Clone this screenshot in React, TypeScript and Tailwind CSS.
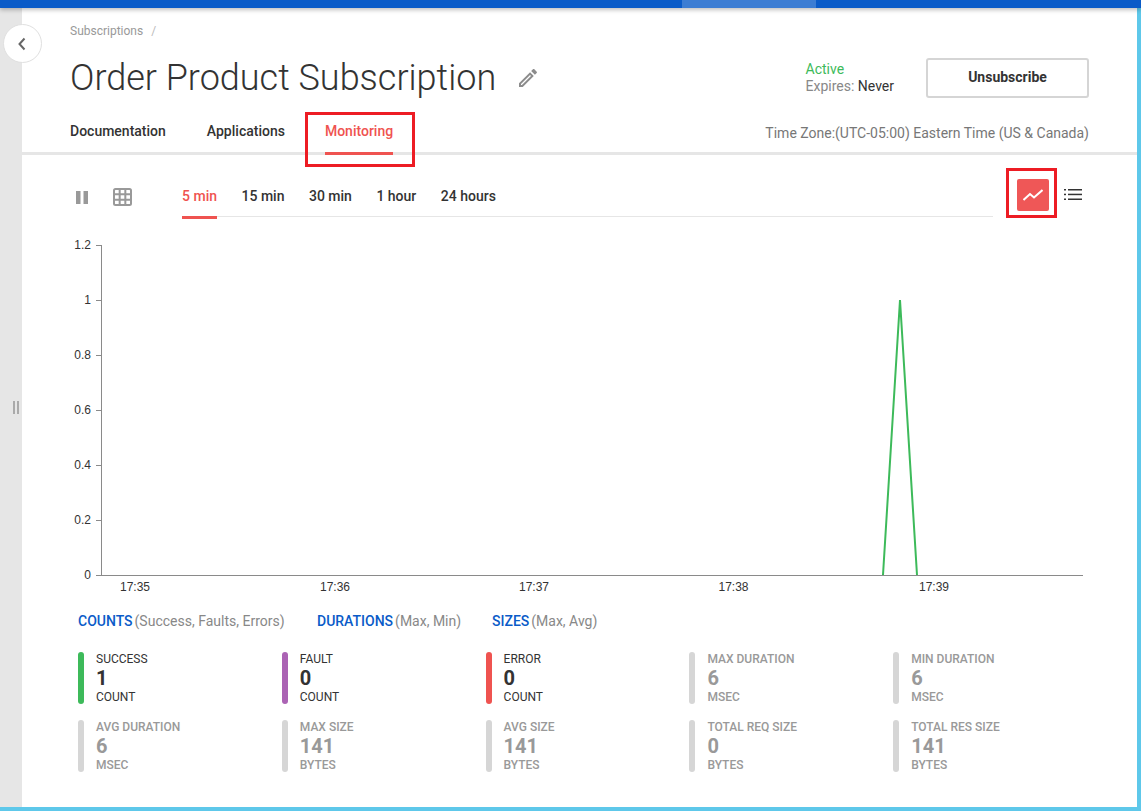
const stats = [
  { label: 'SUCCESS', value: '1', unit: 'COUNT', bar: 'bg-[#3dba5a]', on: true },
  { label: 'FAULT', value: '0', unit: 'COUNT', bar: 'bg-[#ab63b4]', on: true },
  { label: 'ERROR', value: '0', unit: 'COUNT', bar: 'bg-[#ef5350]', on: true },
  { label: 'MAX DURATION', value: '6', unit: 'MSEC', bar: 'bg-[#d6d6d6]', on: false },
  { label: 'MIN DURATION', value: '6', unit: 'MSEC', bar: 'bg-[#d6d6d6]', on: false },
  { label: 'AVG DURATION', value: '6', unit: 'MSEC', bar: 'bg-[#d6d6d6]', on: false },
  { label: 'MAX SIZE', value: '141', unit: 'BYTES', bar: 'bg-[#d6d6d6]', on: false },
  { label: 'AVG SIZE', value: '141', unit: 'BYTES', bar: 'bg-[#d6d6d6]', on: false },
  { label: 'TOTAL REQ SIZE', value: '0', unit: 'BYTES', bar: 'bg-[#d6d6d6]', on: false },
  { label: 'TOTAL RES SIZE', value: '141', unit: 'BYTES', bar: 'bg-[#d6d6d6]', on: false },
];

const yTicks = [
  { y: 245, label: '1.2' },
  { y: 300, label: '1' },
  { y: 355, label: '0.8' },
  { y: 410, label: '0.6' },
  { y: 465, label: '0.4' },
  { y: 520, label: '0.2' },
  { y: 575, label: '0' },
];

const xTicks = [
  { x: 135, label: '17:35' },
  { x: 335, label: '17:36' },
  { x: 534, label: '17:37' },
  { x: 733.5, label: '17:38' },
  { x: 934, label: '17:39' },
];

function Chart() {
  return (
    <svg viewBox="70 235 1019 365" className="block w-[1019px] h-[365px]">
      <line x1="101.5" y1="245" x2="101.5" y2="575" stroke="#8a8a8a" />
      <line x1="96" y1="575.5" x2="1083" y2="575.5" stroke="#8a8a8a" />
      {yTicks.map((t) => (
        <g key={t.label}>
          <line x1="96" y1={t.y + 0.5} x2="101" y2={t.y + 0.5} stroke="#8a8a8a" />
          <text x="91" y={t.y + 4} textAnchor="end" fontSize="12" fill="#333" fontFamily="'Liberation Sans', sans-serif">{t.label}</text>
        </g>
      ))}
      {xTicks.map((t) => (
        <text key={t.label} x={t.x} y="591" textAnchor="middle" fontSize="12" fill="#333" fontFamily="'Liberation Sans', sans-serif">{t.label}</text>
      ))}
      <polyline points="883,575 900,300 917,575" fill="none" stroke="#3dba5a" strokeWidth="2" />
    </svg>
  );
}

function Stat({ label, value, unit, bar, on }: (typeof stats)[number]) {
  return (
    <div className="flex h-[52px]">
      <div className={`w-[6px] h-full rounded-[3px] ${bar}`} />
      <div className={`ml-3 flex flex-col ${on ? 'text-[#333]' : 'text-[#999] font-medium'}`}>
        <span className="text-[12px] leading-[14px] h-[14px]">{label}</span>
        <span className="text-[20px] font-bold leading-[24px] h-[24px]">{value}</span>
        <span className="text-[12px] leading-[14px] h-[14px]">{unit}</span>
      </div>
    </div>
  );
}

export default function App() {
  return (
    <div className="relative flex flex-col w-[1141px] h-[811px] overflow-hidden bg-white font-['Roboto',sans-serif]">
      <div className="relative z-10 h-2 shrink-0 bg-[#0a5bc8] shadow-[0_2px_4px_rgba(0,0,0,0.25)] flex">
        <div className="ml-[682px] w-[134px] bg-[#3c7dd3]" />
      </div>

      <div className="flex flex-1 min-h-0">
        <div className="relative w-[22px] shrink-0 bg-[#e6e6e6]">
          <div className="absolute left-[13px] top-[393px] flex gap-[2px]">
            <div className="w-[2px] h-[13px] bg-[#aaa]" />
            <div className="w-[2px] h-[13px] bg-[#aaa]" />
          </div>
        </div>

        <div className="flex-1 min-w-0 flex flex-col">
          <div className="px-12">
            <div className="pt-[15px] h-[37px] text-[12px] leading-[16px] text-[#999]">
              Subscriptions <span className="ml-[5px] text-[#bbb]">/</span>
            </div>
            <div className="flex items-start h-[67px]">
              <h1 className="text-[36px] font-light leading-[66px] text-[#333]">Order Product Subscription</h1>
              <svg viewBox="0 0 24 24" className="ml-[20px] mt-[21px] w-[24px] h-[24px]" fill="#8c8c8c">
                <path d="M3 17.25V21h3.75L17.81 9.94l-3.75-3.75L3 17.25zM5.92 19H5v-.92l9.06-9.06.92.92L5.92 19zM20.71 7.04c.39-.39.39-1.02 0-1.41l-2.34-2.34c-.39-.39-1.02-.39-1.41 0l-1.83 1.83 3.75 3.75 1.83-1.83z" />
              </svg>
              <div className="ml-auto mt-[13px] flex items-start">
                <div className="text-[14px] leading-[17px] mr-[32px] mt-[3px]">
                  <div className="text-[#3dba5a]">Active</div>
                  <div className="text-[#888]">Expires: <span className="text-[#333]">Never</span></div>
                </div>
                <button className="w-[163px] h-[40px] pb-[2px] border-2 border-[#d5d5d5] rounded-[3px] text-[14px] font-bold text-[#333]">
                  Unsubscribe
                </button>
              </div>
            </div>
          </div>

          <div className="px-12 flex items-end h-[40px] border-b-[3px] border-[#e6e6e6] box-content">
            <div className="h-[40px] pt-[9px] text-[14px] font-medium leading-[20px] text-[#333] mr-[41px]">Documentation</div>
            <div className="h-[40px] pt-[9px] text-[14px] font-medium leading-[20px] text-[#333] mr-[40px]">Applications</div>
            <div className="relative h-[40px] pt-[9px] text-[14px] font-medium leading-[20px] text-[#ef5350]">
              Monitoring
              <div className="absolute left-0 right-0 -bottom-[3px] h-[3px] bg-[#ef5350]" />
              <div className="absolute -left-[20px] -right-[22px] top-0 h-[55px] border-[3px] border-[#ed1c24]" />
            </div>
            <div className="ml-auto mb-[9px] text-[14px] leading-[20px] text-[#777]">Time Zone:(UTC-05:00) Eastern Time (US &amp; Canada)</div>
          </div>

          <div className="pl-[54px] h-[62px] flex items-start shrink-0">
            <svg viewBox="0 0 12 13" className="mt-[36px] w-[12px] h-[13px]" fill="#999">
              <rect x="0" y="0" width="4.5" height="13" />
              <rect x="7.5" y="0" width="4.5" height="13" />
            </svg>
            <svg viewBox="0 0 19 18" className="ml-[25px] mt-[33px] w-[19px] h-[18px]" fill="none" stroke="#999" strokeWidth="2">
              <rect x="1" y="1" width="17" height="16" rx="1.5" />
              <path d="M6.670 1v16M12.330 1v16M1 6.330h17M1 11.670h17" />
            </svg>
            <div className="ml-[50px] mt-[20px] w-[811px] h-[42px] border-b border-[#e6e6e6] flex gap-[24.5px] text-[14px] font-medium leading-[20px] text-[#333] pt-[11px]">
              <div className="relative h-[31px] text-[#ef5350]">
                5 min
                <div className="absolute left-0 right-0 bottom-[-2px] h-[3px] bg-[#ef5350]" />
              </div>
              <div>15 min</div>
              <div>30 min</div>
              <div>1 hour</div>
              <div>24 hours</div>
            </div>
            <div className="relative ml-[24px] mt-[24px] w-[32px] h-[32px] rounded-[2px] bg-[#ef5757] flex items-center justify-center">
              <svg viewBox="0 0 20 12" className="w-[20px] h-[12px]" fill="none" stroke="#fff" strokeWidth="2">
                <polyline points="0.500,11 7,5 11,8.500 19.500,1" />
              </svg>
              <div className="absolute -left-[11px] -top-[11px] w-[51px] h-[50px] border-[3px] border-[#ed1c24]" />
            </div>
            <svg viewBox="0 0 18 11" className="ml-[15px] mt-[34px] w-[18px] h-[11px]" fill="#333">
              <rect x="0" y="0" width="2" height="1.500" />
              <rect x="0" y="4.700" width="2" height="1.500" />
              <rect x="0" y="9.500" width="2" height="1.500" />
              <rect x="4" y="0" width="14" height="1.500" />
              <rect x="4" y="4.700" width="14" height="1.500" />
              <rect x="4" y="9.500" width="14" height="1.500" />
            </svg>
          </div>

          <div className="pl-12 pt-[18px]">
            <Chart />
          </div>

          <div className="pl-14 h-[20px] mt-[11px] flex text-[14px] leading-[20px] text-[#888]">
            <div className="w-[239px]"><span className="font-medium text-[#0a5bc8] mr-[2px]">COUNTS</span>(Success, Faults, Errors)</div>
            <div className="w-[175px]"><span className="font-medium text-[#0a5bc8] mr-[2px]">DURATIONS</span>(Max, Min)</div>
            <div><span className="font-medium text-[#0a5bc8] mr-[2px]">SIZES</span>(Max, Avg)</div>
          </div>

          <div className="pl-14 mt-[21px] w-[1075px] grid grid-cols-5 gap-y-4">
            {stats.map((s) => (
              <Stat key={s.label} {...s} />
            ))}
          </div>
        </div>

        <div className="w-1 shrink-0 bg-[#5ec8ea]" />
      </div>

      <div className="h-1 shrink-0 bg-[#5ec8ea]" />

      <div className="absolute z-20 left-[3px] top-[24px] w-[39px] h-[39px] pr-[2px] rounded-full bg-white border border-[#e0e0e0] flex items-center justify-center">
        <svg viewBox="0 0 10 14" className="w-[10px] h-[14px]" fill="none" stroke="#666" strokeWidth="2">
          <polyline points="7.500,1.500 2.500,7 7.500,12.500" />
        </svg>
      </div>
    </div>
  );
}
